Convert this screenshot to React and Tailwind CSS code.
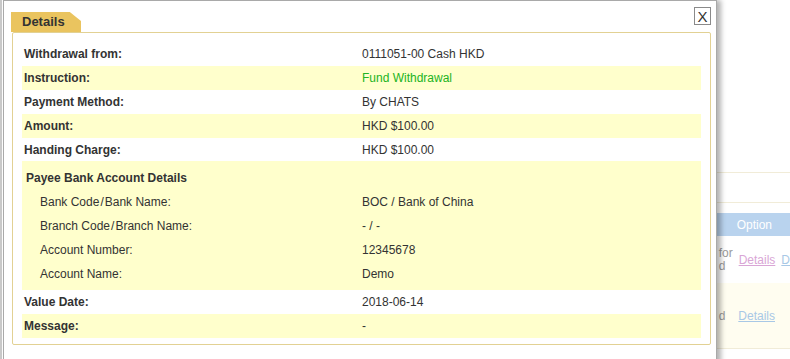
import React from "react";

const Slash = () => <span className="px-[1px]">/</span>;

const rows = [
  { label: "Withdrawal from:", value: "0111051-00 Cash HKD" },
  { label: "Instruction:", value: "Fund Withdrawal", green: true, alt: true },
  { label: "Payment Method:", value: "By CHATS" },
  { label: "Amount:", value: "HKD $100.00", alt: true },
  { label: "Handing Charge:", value: "HKD $100.00" },
];

const payee = [
  { label: <>Bank Code<Slash />Bank Name:</>, value: "BOC / Bank of China" },
  { label: <>Branch Code<Slash />Branch Name:</>, value: "- / -" },
  { label: "Account Number:", value: "12345678" },
  { label: "Account Name:", value: "Demo" },
];

const Row = ({ label, value, green, alt }) => (
  <div className={`flex h-6 items-center ${alt ? "bg-[#ffffcc]" : ""}`}>
    <div className="w-[340px] pl-[2px] font-bold text-[#333]">{label}</div>
    <div className={green ? "text-[#22b422]" : "text-[#333]"}>{value}</div>
  </div>
);

export default function App() {
  return (
    <div
      className="relative w-[790px] h-[359px] overflow-hidden bg-white text-[12px]"
      style={{ fontFamily: '"Liberation Sans", Arial, sans-serif' }}
    >
      {/* page behind the dialog */}
      <div className="flex h-full">
        <div className="w-[3px] bg-[#c9c9c9]" />
        <div className="ml-[713px] flex-1 flex flex-col text-[#9a9a9a]">
          <div className="h-[172px]" />
          <div className="h-[30px] border-t border-[#f1ecd8]" />
          <div className="h-[11px] border-t border-[#f1ecd8]" />
          <div className="h-[23px] bg-[#b9d3ee] flex items-center pl-[22px] text-white">
            Option
          </div>
          <div className="h-[47px] flex items-center gap-[6px] pl-[4px]">
            <div className="leading-[13px]">
              for
              <br />d
            </div>
            <span className="underline text-[#d9a6d6]">Details</span>
            <span className="underline text-[#a8c8e6]">D</span>
          </div>
          <div className="h-[65px] bg-[#fffdf0] flex items-center gap-[13px] pl-[4px]">
            <span>d</span>
            <span className="underline text-[#a8c8e6]">Details</span>
          </div>
          <div className="border-t border-[#f1ecd8]" />
        </div>
      </div>

      {/* dialog */}
      <div className="absolute left-[3px] top-0 w-[714px] h-[370px] bg-white border border-[#a9a9a9] shadow-[4px_0_5px_rgba(0,0,0,0.3)]">
        <button className="absolute left-[690px] top-[6px] w-[17px] h-[18px] border border-[#8a8a8a] bg-white flex items-center justify-center text-[15px] leading-none text-[#333]">
          X
        </button>
        <div className="pt-[11px] pl-[7px]">
          <div className="w-[70px] h-[20px] bg-[#eac45f] pl-[11px] flex items-center font-bold text-[#333] text-[13px] [clip-path:polygon(0_0,84%_0,100%_45%,100%_100%,0_100%)]">
            Details
          </div>
        </div>
        <div className="ml-[8px] w-[699px] h-[313px] border border-[#e2d193] rounded-[2px] pt-[9px] px-[9px]">
          {rows.map((r) => (
            <Row key={r.label} {...r} />
          ))}
          <div className="bg-[#ffffcc] mt-[-1px] pt-[5px] pb-[4px]">
            <div className="h-6 flex items-center pl-[4px] font-bold text-[#333]">
              Payee Bank Account Details
            </div>
            {payee.map((p) => (
              <div key={p.value} className="flex h-6 items-center text-[#333]">
                <div className="w-[340px] pl-[18px]">{p.label}</div>
                <div>{p.value}</div>
              </div>
            ))}
          </div>
          <Row label="Value Date:" value="2018-06-14" />
          <Row label="Message:" value="-" alt />
        </div>
      </div>
    </div>
  );
}
